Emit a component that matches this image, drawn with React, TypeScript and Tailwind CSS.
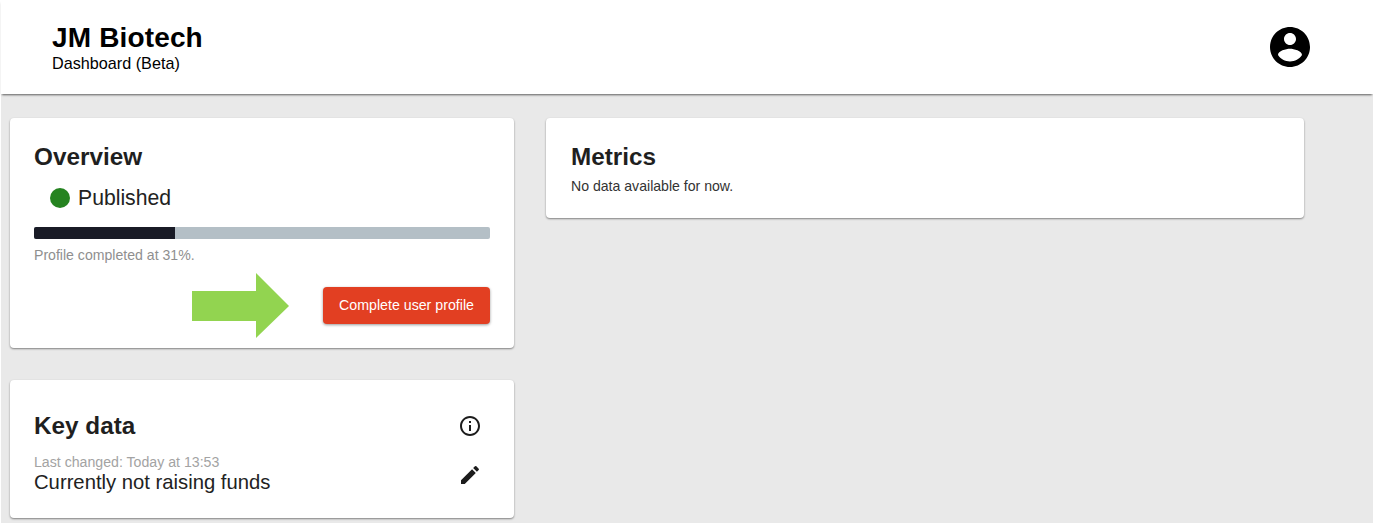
const sans = "font-['Liberation_Sans',Arial,sans-serif]";

function Card({ className, children }: { className: string; children: React.ReactNode }) {
    return (
        <div className={`rounded-[4px] bg-white shadow-[0_1px_2px_rgba(0,0,0,0.45)] ${className}`}>
            {children}
        </div>
    );
}

function Icon({ d, size, className }: { d: string; size: number; className?: string }) {
    return (
        <svg width={size} height={size} viewBox="0 0 24 24" fill="currentColor" className={className}>
            <path d={d} />
        </svg>
    );
}

const accountPath = "M12 2C6.48 2 2 6.48 2 12s4.48 10 10 10 10-4.48 10-10S17.52 2 12 2zm0 3c1.66 0 3 1.34 3 3s-1.34 3-3 3-3-1.34-3-3 1.34-3 3-3zm0 14.2c-2.5 0-4.71-1.28-6-3.22.03-1.99 4-3.08 6-3.08 1.99 0 5.97 1.09 6 3.08-1.29 1.94-3.5 3.22-6 3.22z";
const infoPath = "M11 7h2v2h-2zm0 4h2v6h-2zm1-9C6.48 2 2 6.48 2 12s4.48 10 10 10 10-4.48 10-10S17.52 2 12 2zm0 18c-4.41 0-8-3.59-8-8s3.59-8 8-8 8 3.59 8 8-3.59 8-8 8z";
const editPath = "M3 17.25V21h3.75L17.81 9.94l-3.75-3.75L3 17.25zM20.71 7.04c.39-.39.39-1.02 0-1.41l-2.34-2.34a.9959.9959 0 0 0-1.41 0l-1.83 1.83 3.75 3.75 1.83-1.83z";

export default function App() {
    return (
        <div className={`${sans} h-[529px] w-[1373px] overflow-hidden bg-white pl-px pb-[6px]`}>
            <div className="h-full bg-[#e9e9e9]">
                <header className="flex h-[94px] items-start justify-between bg-white pl-[51px] pr-[59px] pt-[22px] shadow-[0_2px_2px_-1px_rgba(0,0,0,0.6)]">
                    <div className="text-black">
                        <h1 className="text-[28px] leading-[32px] font-bold tracking-[0.15px]">JM Biotech</h1>
                        <p className="text-[16.2px] leading-[19px]">Dashboard (Beta)</p>
                    </div>
                    <Icon d={accountPath} size={48} className="mt-px text-black" />
                </header>

                <main className="flex items-start gap-8 pl-[9px] pt-6">
                    <div className="flex w-[504px] flex-col gap-8">
                        <Card className="h-[230px] px-6 pt-[25px]">
                            <h2 className="text-[24.3px] leading-7 font-bold text-[#1f1f1f]">Overview</h2>
                            <div className="mt-[17px] flex items-center gap-[8px] pl-4 text-[21.2px] leading-[16px] text-[#222222]">
                                <span className="h-5 w-5 rounded-full bg-[#258320]" />
                                <span>Published</span>
                            </div>
                            <div className="mt-[19px] h-3 w-[456px] overflow-hidden rounded-[2px] bg-[#b4bfc6]">
                                <div className="h-full w-[141px] bg-[#191b26]" />
                            </div>
                            <p className="mt-[8px] text-[14.1px] leading-4 text-[#8f8f8f]">Profile completed at 31%.</p>
                            <div className="mt-[10px] flex items-center justify-end gap-[34px]">
                                <svg width="97" height="65" viewBox="0 0 97 65" className="text-[#92d450]" fill="currentColor">
                                    <path d="M0 18H64V0L97 33L64 65V48H0Z" />
                                </svg>
                                <button className="h-[37px] w-[167px] rounded-[4px] bg-[#e23f22] text-[14.2px] text-white shadow-[0_1px_3px_rgba(0,0,0,0.4)]">
                                    Complete user profile
                                </button>
                            </div>
                        </Card>

                        <Card className="flex h-[138px] items-start justify-between pl-6 pr-[32px] pt-[32px]">
                            <div>
                                <h2 className="text-[24.3px] leading-7 font-bold text-[#1f1f1f]">Key data</h2>
                                <p className="mt-[14px] text-[14.15px] leading-4 text-[#a3a3a3]">Last changed: Today at 13:53</p>
                                <p className="text-[20.25px] leading-[24px] text-[#222222]">Currently not raising funds</p>
                            </div>
                            <div className="mt-[2px] flex flex-col gap-[25px] text-[#1c1c1c]">
                                <Icon d={infoPath} size={24} />
                                <Icon d={editPath} size={24} />
                            </div>
                        </Card>
                    </div>

                    <Card className="h-[100px] w-[758px] pl-[25px] pr-6 pt-[25px]">
                        <h2 className="text-[24.3px] leading-7 font-bold text-[#1f1f1f]">Metrics</h2>
                        <p className="mt-[7px] text-[14.1px] leading-4 text-[#333333]">No data available for now.</p>
                    </Card>
                </main>
            </div>
        </div>
    );
}
